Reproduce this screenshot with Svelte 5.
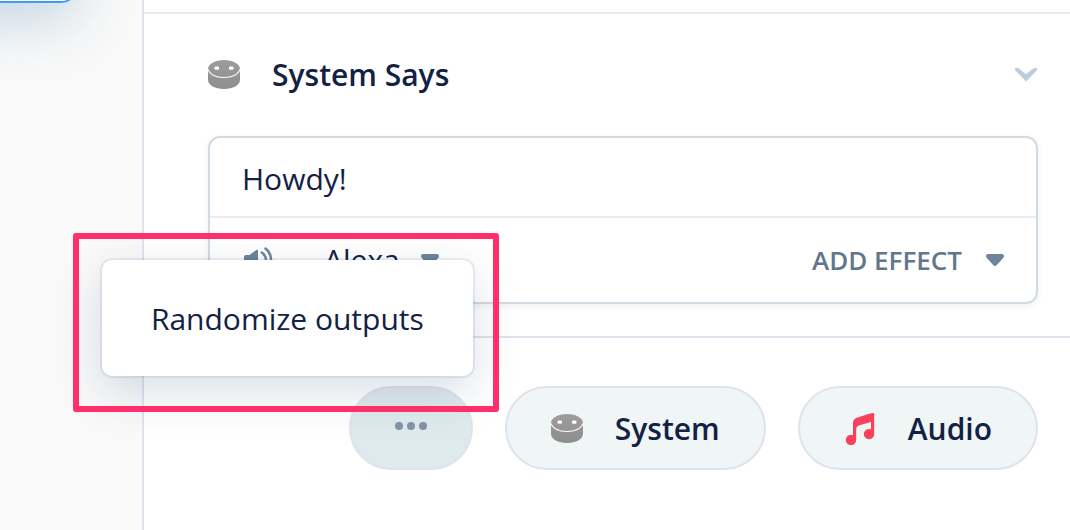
<script lang="ts">
	let text: string = 'Howdy!';
	let voice: string = 'Alexa';
	let menuOpen: boolean = true;

	const voices: string[] = ['Alexa'];

	function toggleMenu() {
		menuOpen = !menuOpen;
	}
</script>

{#snippet systemIcon(id: string)}
	<svg class="system-icon" viewBox="0 0 32 30" aria-hidden="true">
		<defs>
			<linearGradient id={id} x1="0" y1="0" x2="0" y2="1">
				<stop offset="0" stop-color="#9d9d9d" />
				<stop offset="1" stop-color="#8d8d8d" />
			</linearGradient>
		</defs>
		<path fill="url(#{id})" d="M0 9C0 4 7 0 16 0s16 4 16 9v11c0 5-7 9-16 9S0 25 0 20z" />
		<path fill="none" stroke="#fff" stroke-width="1.2" d="M.3 9.500c.7 4.500 7.200 8 15.700 8s15-3.500 15.700-8" />
		<rect x="6.500" y="6.500" width="4.500" height="3.200" rx="1.200" fill="#fff" />
		<rect x="21" y="6.500" width="4.500" height="3.200" rx="1.200" fill="#fff" />
	</svg>
{/snippet}

{#snippet caret()}
	<svg class="caret" viewBox="0 0 18 12" aria-hidden="true">
		<path d="M2.200 0h13.600C18 0 18.700 2.400 17.200 3.900l-6.600 7.300c-.9 1-2.300 1-3.200 0L.8 3.900C-.7 2.400 0 0 2.200 0z" />
	</svg>
{/snippet}

<div class="editor">
	<div class="canvas">
		<div class="block"></div>
	</div>

	<main class="panel">
		<section class="step">
			<header>
				{@render systemIcon('head-fill')}
				<h2>System Says</h2>
				<button class="collapse" aria-label="Collapse">
					<svg viewBox="0 0 24 16" aria-hidden="true">
						<path d="M1.200 1.200C2.200.4 3.600.6 4.500 1.300L12 7l7.500-5.700c.9-.7 2.300-.9 3.300-.1.700.8.400 1.700-.3 2.500L12 14.500 1.500 3.700C.8 2.900.5 2 1.200 1.200z" />
					</svg>
				</button>
			</header>

			<div class="speak">
				<input class="speak-text" type="text" aria-label="Speech text" bind:value={text} />
				<div class="speak-tools">
					<svg class="speaker" viewBox="0 0 30 26" aria-hidden="true">
						<path class="cone" d="M2 8h3.500L12 3.200c1-.7 2-.4 2 .8v18c0 1.200-1 1.500-2 .8L5.500 18H2c-1.100 0-2-.9-2-2v-6c0-1.100.9-2 2-2z" />
						<path class="wave" d="M17.800 5.500c3 2.200 4.200 4.700 4.200 7.500s-1.200 5.300-4.200 7.500" />
						<path class="wave" d="M21.500 1.500c3.800 3 5.500 7 5.500 11.500s-1.700 8.500-5.500 11.500" />
					</svg>
					<div class="voice">
						<select aria-label="Voice" bind:value={voice}>
							{#each voices as v}
								<option value={v}>{v}</option>
							{/each}
						</select>
						{@render caret()}
					</div>
					<button class="effect">ADD EFFECT {@render caret()}</button>
				</div>
			</div>
		</section>

		<footer class="actions">
			<div class="more">
				<button class="pill pill-more" aria-label="More options" aria-expanded={menuOpen} on:click={toggleMenu}>
					<span class="dot"></span>
					<span class="dot"></span>
					<span class="dot"></span>
				</button>
				{#if menuOpen}
					<div class="menu">
						<button class="menu-item">Randomize outputs</button>
						<div class="highlight"></div>
					</div>
				{/if}
			</div>
			<button class="pill">
				{@render systemIcon('pill-fill')}
				System
			</button>
			<button class="pill">
				<svg class="note" viewBox="0 0 32 32" aria-hidden="true">
					<path d="M28.500.1c1-.3 1.700.3 1.700 1.200V20.800a5.200 5.200 0 1 1-3.200-4.500V9L15.500 12.300c-2.200.7-3.300 2-3.300 4.200V26.800a5.200 5.200 0 1 1-3.200-4.600V10c0-2.700 1.500-4.300 4-5.200 5-1.800 10-3.300 15.500-4.700z" />
				</svg>
				Audio
			</button>
		</footer>
	</main>
</div>

<style>
	:global(body) {
		margin: 0;
		background: #fff;
	}

	.editor {
		display: flex;
		min-height: 100vh;
		overflow: hidden;
		font-family: 'Open Sans', sans-serif;
		font-size: 30px;
		line-height: 40px;
		color: #132144;
	}

	button,
	input,
	select {
		margin: 0;
		padding: 0;
		border: 0;
		background: none;
		font: inherit;
		color: inherit;
	}

	button {
		cursor: pointer;
	}

	svg {
		display: block;
		flex: none;
	}

	.canvas {
		flex: none;
		width: 142px;
		overflow: hidden;
		background: #f9f9f9;
	}

	/* bottom corner of the selected block, the rest is scrolled away */
	.block {
		box-sizing: border-box;
		width: 276px;
		height: 200px;
		margin: -197px 0 0 -200px;
		border: 2px solid #3d9df5;
		border-radius: 14px;
		background: #fff;
		box-shadow: 0 16px 60px rgba(17, 90, 150, 0.24);
	}

	.panel {
		flex: 1;
		min-width: 0;
		border-left: 2px solid #dfe3ed;
		background: #fff;
	}

	.step {
		margin-top: 12px;
		padding: 40px 32px 32px 64px;
		border-top: 2px solid #e8ebf2;
		border-bottom: 2px solid #dfe3ed;
	}

	header {
		display: flex;
		align-items: center;
		gap: 32px;
		height: 42px;
		margin-bottom: 40px;
	}

	.system-icon {
		width: 32px;
		height: 30px;
	}

	h2 {
		flex: 1;
		margin: 0;
		font-size: 30px;
		font-weight: 600;
	}

	.collapse svg {
		width: 24px;
		height: 16px;
		fill: #becddc;
	}

	.speak {
		border: 2px solid #d2dae2;
		border-radius: 12px;
		box-shadow: 0 2px 6px rgba(17, 49, 96, 0.08);
	}

	.speak-text {
		box-sizing: border-box;
		display: block;
		width: 100%;
		height: 78px;
		padding: 2px 32px 0;
		outline: none;
	}

	.speak-tools {
		display: flex;
		align-items: center;
		height: 84px;
		padding: 0 32px 0 34px;
		border-top: 2px solid #eaecf2;
	}

	.speaker {
		width: 30px;
		height: 26px;
	}

	.cone {
		fill: #6e849a;
	}

	.wave {
		fill: none;
		stroke: #6e849a;
		stroke-width: 2.5;
		stroke-linecap: round;
	}

	.voice {
		display: flex;
		align-items: center;
		margin-left: 50px;
	}

	.voice select {
		width: 97px;
		appearance: none;
		outline: none;
	}

	.caret {
		width: 18px;
		height: 12px;
		fill: #6e849a;
	}

	.effect {
		display: flex;
		align-items: center;
		gap: 24px;
		margin-left: auto;
		font-size: 26px;
		font-weight: 600;
		color: #62778c;
	}

	.actions {
		display: flex;
		justify-content: flex-end;
		gap: 32px;
		padding: 48px 32px;
	}

	.more {
		position: relative;
	}

	.pill {
		display: flex;
		align-items: center;
		gap: 32px;
		box-sizing: border-box;
		height: 84px;
		padding: 2px 44px 0;
		border: 2px solid #dfe3ed;
		border-radius: 42px;
		background: #f0f6f6;
		font-weight: 600;
	}

	.pill-more {
		gap: 4px;
		padding: 0 44px 4px;
		background: #dfeaec;
	}

	.dot {
		width: 8px;
		height: 8px;
		border-radius: 50%;
		background: #8094aa;
	}

	.note {
		width: 32px;
		height: 32px;
		fill: #f9415b;
	}

	.menu {
		position: absolute;
		right: 0;
		bottom: calc(100% + 10px);
		border-radius: 10px;
		background: #fff;
		box-shadow:
			0 0 0 2px rgba(17, 49, 96, 0.08),
			0 16px 48px rgba(17, 49, 96, 0.16);
	}

	.menu-item {
		display: block;
		padding: 39px 49px 37px;
		white-space: nowrap;
	}

	.highlight {
		position: absolute;
		inset: -27px -26px -36px -29px;
		border: 6px solid #ff2f6c;
		border-radius: 3px;
		pointer-events: none;
	}
</style>
